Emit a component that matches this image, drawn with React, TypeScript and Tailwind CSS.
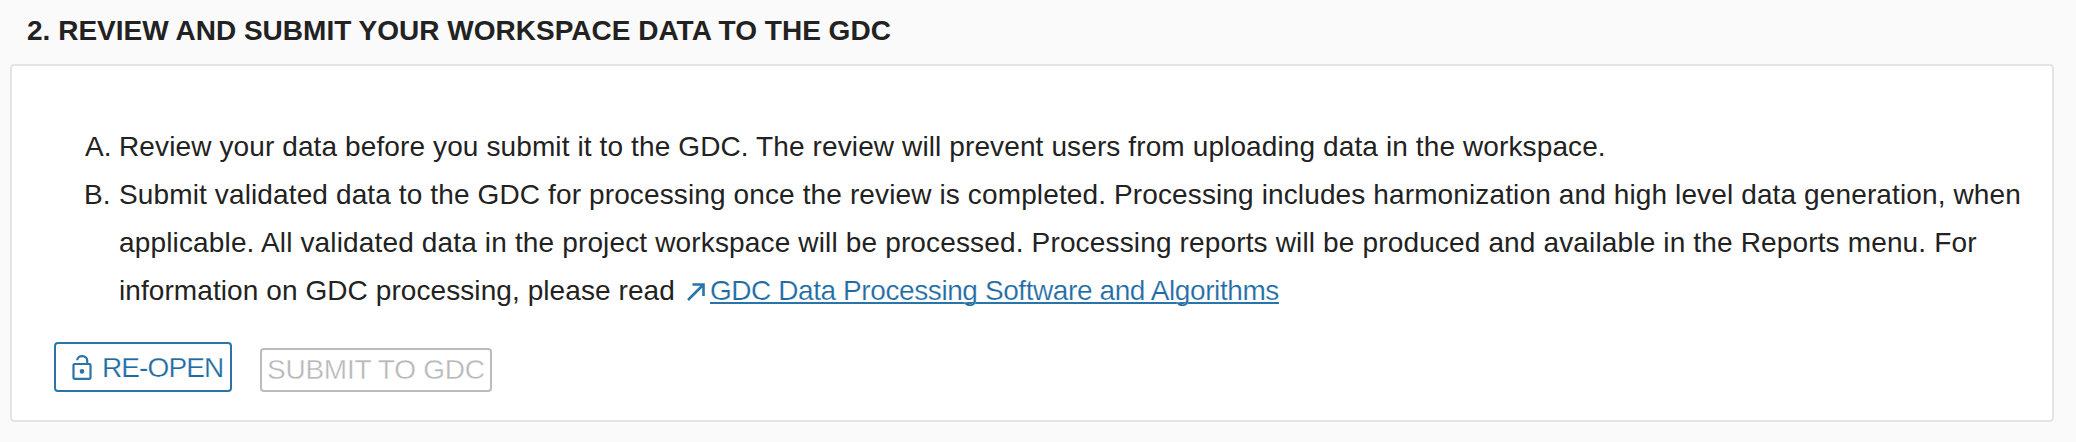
export default function App() {
  return (
    <main className="flex h-[442px] w-[2076px] flex-col overflow-hidden bg-[#fafafa] font-['Liberation_Sans',Arial,sans-serif] text-[28px] text-[#222]">
      <h2 className="h-16 pl-[27px] leading-[61px] font-bold tracking-[0.01px] whitespace-nowrap">
        2. REVIEW AND SUBMIT YOUR WORKSPACE DATA TO THE GDC
      </h2>
      <section className="ml-[10px] flex h-[358px] w-[2044px] flex-col rounded-[4px] border-2 border-[#e4e4e4] bg-white pt-[57px]">
        <ol className="flex flex-col pl-[73px] leading-[48px] whitespace-nowrap">
          <li className="flex">
            <span className="w-[34px] shrink-0">A.</span>
            <p className="tracking-[0.115px]">Review your data before you submit it to the GDC. The review will prevent users from uploading data in the workspace.</p>
          </li>
          <li className="flex">
            <span className="-ml-px w-[35px] shrink-0">B.</span>
            <p>
              <span className="block tracking-[0.126px]">Submit validated data to the GDC for processing once the review is completed. Processing includes harmonization and high level data generation, when</span>
              <span className="block tracking-[0.152px]">applicable. All validated data in the project workspace will be processed. Processing reports will be produced and available in the Reports menu. For</span>
              <span className="flex tracking-[0.08px]">
                information on GDC processing, please read
                <a href="#" className="ml-3 flex items-start text-[#2a74a9]">
                  <svg viewBox="0 0 18 18" className="mt-[16px] mr-[5px] size-[18px]" fill="none" stroke="currentColor" strokeWidth="2.6">
                    <path d="M1 17 16 2M5.5 1.5h11V13" />
                  </svg>
                  <span className="h-[37px] border-b-2 border-[#2a74a9] text-[#1f6ca4] tracking-[-0.41px] [-webkit-text-stroke:0.2px_white]">GDC Data Processing Software and Algorithms</span>
                </a>
              </span>
            </p>
          </li>
        </ol>
        <div className="mt-[27px] flex items-end gap-7 pl-[42px]">
          <button className="flex h-[50px] w-[178px] items-center rounded-[4px] border-2 border-[#2a74a9] pl-4 text-[#2a74a9]">
            <svg viewBox="0 0 20 26" className="mr-[10px] h-[26px] w-5 shrink-0" fill="none" stroke="currentColor" strokeWidth="2.2">
              <rect x="1.5" y="10" width="17" height="14.8" rx="1" />
              <path d="M5.2 6.2a5 4.4 0 0 1 10 .5V10" />
              <circle cx="10" cy="17.4" r="2.3" fill="currentColor" stroke="none" />
            </svg>
            <span className="pt-px tracking-[-0.9px] whitespace-nowrap text-[#1f6ca4] [-webkit-text-stroke:0.25px_white]">RE-OPEN</span>
          </button>
          <button className="flex h-[44px] w-[232px] items-center rounded-[4px] border-2 border-[#bbb] pl-[5px] tracking-[-0.25px] whitespace-nowrap text-[#b8b8b8] [-webkit-text-stroke:0.35px_white]">SUBMIT TO GDC</button>
        </div>
      </section>
    </main>
  );
}
